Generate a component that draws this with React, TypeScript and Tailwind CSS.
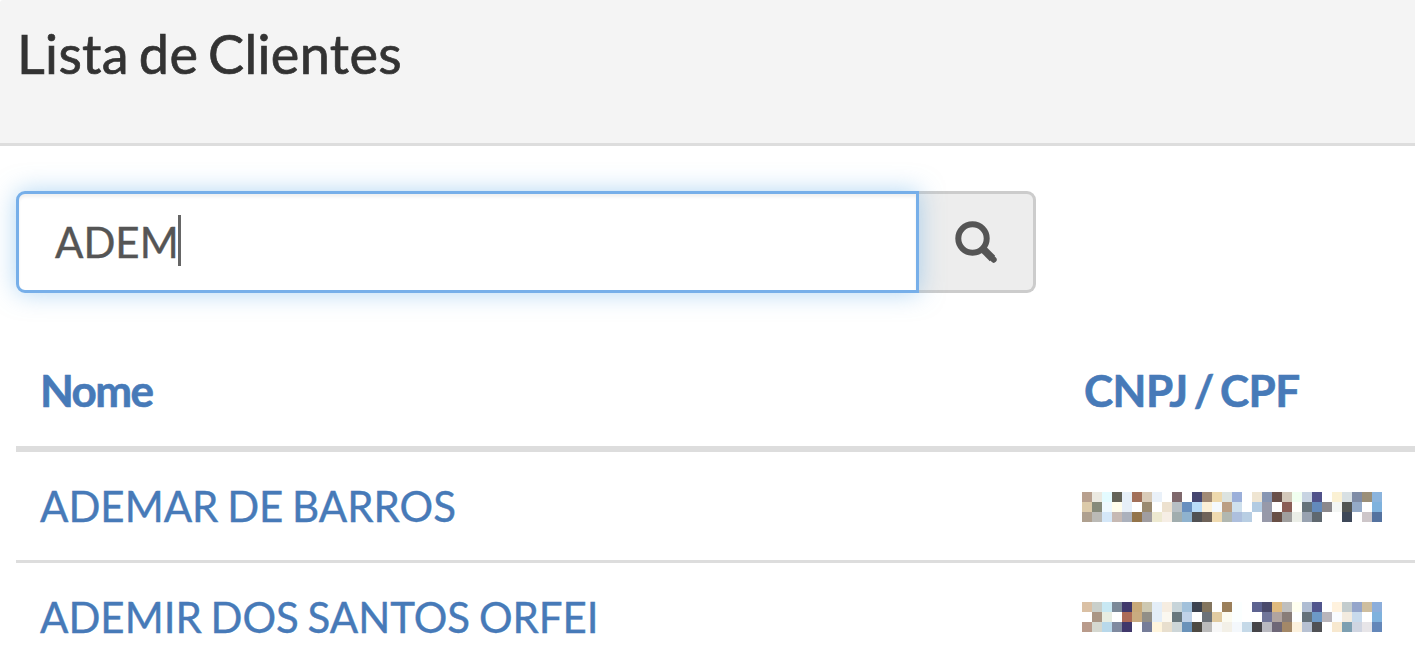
interface Cliente {
  id: number
  nome: string
  documento: string[]
}

// each documento is a 30x3 grid of blurred cells, one string per line
const clientes: Cliente[] = [
  {
    id: 1,
    nome: "ADEMAR DE BARROS",
    documento: [
      "b8a08e ebe9e1 e4fbff 646358 e6eff8 a27059 d9cbb8 eaf1f9 ffffff 7f686c ffffff 454670 a18a75 eed9ad dce3e0 9bafd9 ffffff efe5d2 8796b3 69504a d3c8ba f1fff0 c8d4e2 50528a ffffff fbf1d4 d8e0e3 7f8ca6 9b8f78 8bb4dd",
      "dccaa9 868a7a eff9ff fffdec e6eff8 ffffff 9a8a70 ffffff ede1cf b7bfc4 688fbf b9dcf8 fbf0d7 f4f9fe bb9e84 cfe0ed ffffff b2cbe2 9799a9 ffffff 8b5e56 fffffb 66737a 638abb 8b888c f4f6f4 525553 94aac7 ffffff 7fb2dd",
      "afa08f bbbab6 d4e7f8 c6b9b3 abb1bc 93744a a09da0 ede9d0 f6eee5 a1adae 8fb2ce 505153 6f6359 efdab0 b1b7b0 adbfdd b8cee3 ffffff 9799a9 684f46 a09f9e ebeee7 98a2b0 5f686f ffffff ffffff 3e4859 ffffff cdc6c9 54729f",
    ],
  },
  {
    id: 2,
    nome: "ADEMIR DOS SANTOS ORFEI",
    documento: [
      "dac0a4 c9cfca c8e8f3 7b8998 40386b c8a979 cdc8b1 e4eef8 f6ede1 c7d4d9 a2c1db 3c4350 83755e ffffff 9b7f5a fbffff ffffff 5d6390 4a4a6b dfba7e bfbfbe fffff0 afbdd2 50558d ffffff fff2de c3cccd 94a5cb cebe9f 8caedb",
      "ffffff aa9685 e8ede2 ffffff ad6b57 c9ab80 928f87 e4eef8 fbf8f0 68777d c0d2e8 ffffff 6c7279 e1cba1 fcfbf0 fbffff ffffff ffffff 71769a b0a4a0 887d78 fdffff 65727a 6d99c6 b9b5bb fafcff f3ebdf c8daec ffffff 7fb2dd",
      "b99b8b d5d8d0 b8d8ea 7f8aa0 40386b ffffff 767d99 fff5dd e8dfce cdd6d8 6a92b9 4d4a43 bbbbbb f7f7f7 f3f0e7 f4f8fc c5d9e8 454448 b9b9c0 6e6777 a38868 fcf1dd b7c1d2 505155 ffffff f7e8cf 7d9fb1 d0d5e1 e7e5e8 6487b9",
    ],
  },
]

function Documento({ linhas }: { linhas: string[] }) {
  return (
    <div className="grid w-[300px] grid-cols-[repeat(30,10px)] auto-rows-[10px]">
      {linhas.join(" ").split(" ").map((cor, i) => (
        <span key={i} style={{ backgroundColor: `#${cor}` }} />
      ))}
    </div>
  )
}

export default function App() {
  return (
    <div className="h-[661px] w-[1415px] overflow-hidden bg-white font-['Lato',sans-serif]">
      <header className="h-[146px] rounded-tl-[3px] border-b-3 border-[#dddddd] bg-[#f4f4f4] pl-[17px] pt-[22px]">
        <h1 className="whitespace-nowrap text-[54px] leading-[64px] tracking-[0.35px] text-[#333333] [-webkit-text-stroke:0.7px] [word-spacing:-4.4px]">
          Lista de Clientes
        </h1>
      </header>

      <div className="ml-4 mt-[45px] flex h-[102px]">
        <div className="relative flex w-[903px] items-center rounded-l-[9px] border-3 border-[#77afe9] bg-white pl-9 shadow-[0_0_24px_rgba(102,175,233,0.5),inset_0_3px_3px_rgba(0,0,0,0.06)]">
          <span className="text-[42px] leading-[50px] text-[#555555] [-webkit-text-stroke:0.4px]">ADEM</span>
          <span className="-ml-px mb-1 h-[51px] w-[3px] bg-[#666666]" />
        </div>
        <button className="flex w-[117px] items-center justify-center rounded-r-[9px] border-3 border-l-0 border-[#cccccc] bg-[#ededed]">
          <svg className="size-[44px]" viewBox="0 0 44 44" fill="none" stroke="#555555">
            <circle cx="18.5" cy="18.5" r="14.2" strokeWidth="6" />
            <path d="M29 29 38.5 38.5" strokeWidth="7.5" />
            <path d="M36.5 36.5 39.7 39.7" strokeWidth="6" strokeLinecap="round" />
          </svg>
        </button>
      </div>

      <div className="ml-4 mt-[47px] text-[42px] text-[#477ab8]">
        <div className="flex h-[112px] items-center border-b-6 border-[#dddddd] pb-[7px] pl-6 text-[44px] font-bold [-webkit-text-stroke:0.6px]">
          <span className="w-[1044px] tracking-[-1.6px]">Nome</span>
          <span className="whitespace-nowrap tracking-[-0.5px] [word-spacing:-4px]">CNPJ / CPF</span>
        </div>
        {clientes.map((cliente, i) => (
          <div key={cliente.id} className="flex h-[111px] items-center border-b-3 border-[#dddddd] pl-6">
            <a className="w-[1042px] whitespace-nowrap [-webkit-text-stroke:0.4px] [word-spacing:-2px]">{cliente.nome}</a>
            <div className={i === 0 ? "pt-0.5" : ""}>
              <Documento linhas={cliente.documento} />
            </div>
          </div>
        ))}
      </div>
    </div>
  )
}
